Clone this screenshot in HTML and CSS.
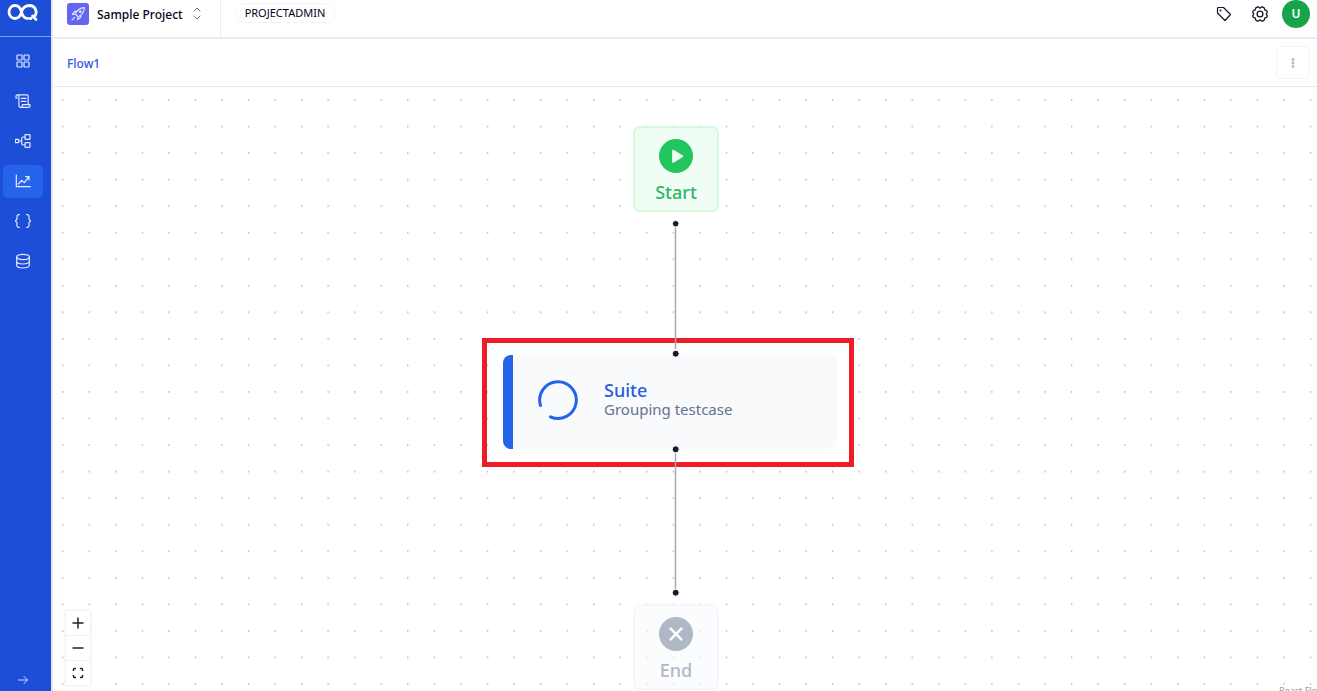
FILE: index.html
```html
<!DOCTYPE html>
<html lang="en">
<head>
<meta charset="utf-8">
<title>Flow1</title>
<link rel="stylesheet" href="styles.css">
</head>
<body>
<div class="app">
  <aside class="sidebar">
    <a class="logo" href="#" aria-label="Home">
      <svg width="32" height="20" viewBox="0 0 32 20" fill="none" stroke="#fff" stroke-width="2.800" stroke-linecap="round">
        <path d="M8 2.500A6 6.500 0 1 0 8 15.500C11 15.500 13.500 13 14.500 9C15.500 5 18 2.500 23 2.500A6.300 6.500 0 0 1 27 13.800M8 2.500C11 2.500 13.500 5 14.500 9C15.500 13 17.500 15.500 20.500 15.500M25.500 13L29 16.500M23 15.500H24"/>
      </svg>
    </a>
    <nav class="nav">
      <a class="nav-item" href="#" aria-label="Dashboard">
        <svg class="icon" viewBox="0 0 24 24"><rect x="3" y="3" width="7.500" height="7.500" rx="1"/><rect x="13.500" y="3" width="7.500" height="7.500" rx="1"/><rect x="3" y="13.500" width="7.500" height="7.500" rx="1"/><rect x="13.500" y="13.500" width="7.500" height="7.500" rx="1"/></svg>
      </a>
      <a class="nav-item" href="#" aria-label="Scripts">
        <svg class="icon" viewBox="0 0 24 24"><path d="M3.500 7.500H1.500V5a2.200 2.200 0 0 1 4.400 0v14a2.500 2.500 0 0 0 2.500 2.500H20a2.500 2.500 0 0 0 2.500-2.500v-1.500H11V19a2.500 2.500 0 0 1-2.600 2.500M3.700 2.800H17.500a2.200 2.200 0 0 1 2.200 2.200v12M9.500 8h7M9.500 12.500h7"/></svg>
      </a>
      <a class="nav-item" href="#" aria-label="Flows">
        <svg class="icon" viewBox="0 0 24 24"><rect x="0.500" y="9.500" width="5" height="5" rx="1"/><rect x="15" y="2.500" width="7.500" height="7" rx="1"/><rect x="15" y="14.500" width="7.500" height="7" rx="1"/><path d="M5.500 12H10M15 6h-2.500A2.500 2.500 0 0 0 10 8.500v7a2.500 2.500 0 0 0 2.500 2.500H15"/></svg>
      </a>
      <a class="nav-item active" href="#" aria-label="Runs">
        <svg class="icon" viewBox="0 0 24 24"><path d="M2 3v17.500h21M5 16.500l5-5.500 4 3.500 7-9M16 5.500h5v5"/></svg>
      </a>
      <a class="nav-item" href="#" aria-label="Variables">
        <svg class="icon" viewBox="0 0 24 24"><path d="M6.500 2.500h-1A2.500 2.500 0 0 0 3 5v4.500L.5 12 3 14.500V19a2.500 2.500 0 0 0 2.500 2.500h1M17.500 2.500h1A2.500 2.500 0 0 1 21 5v4.500l2.500 2.500-2.500 2.500V19a2.500 2.500 0 0 1-2.500 2.500h-1"/></svg>
      </a>
      <a class="nav-item" href="#" aria-label="Data">
        <svg class="icon" viewBox="0 0 24 24"><ellipse cx="12" cy="6" rx="9.500" ry="4"/><path d="M2.500 6v12.500c0 2.200 4.200 4 9.500 4s9.500-1.800 9.500-4V6M2.500 12.500c0 2.200 4.200 4 9.500 4s9.500-1.800 9.500-4"/></svg>
      </a>
    </nav>
    <button class="expand" type="button" aria-label="Expand menu">
      <svg width="12" height="12" viewBox="0 0 12 12" fill="none" stroke="#c7d7fb" stroke-linecap="round" stroke-linejoin="round"><path d="M1.500 6h9M7 2.500L10.500 6 7 9.500"/></svg>
    </button>
  </aside>

  <main class="main">
    <header class="topbar">
      <button class="project" type="button">
        <span class="project-icon">
          <svg width="16" height="16" viewBox="0 0 24 24" fill="none" stroke="#e9e9ff" stroke-width="1.700" stroke-linejoin="round" stroke-linecap="round"><path d="M8 12C10 7 14 3 21.500 2.500 21 10 17 14 12 16zM8 12l-4.500.5L7 8h3M12 16l-.5 4.500L16 17v-3M8 12l4 4M3 21l4-4"/><circle cx="15.500" cy="8.500" r="1.200"/></svg>
        </span>
        <span>Sample Project</span>
        <svg width="12" height="16" viewBox="0 0 12 16" fill="none" stroke="#777" stroke-linecap="round" stroke-linejoin="round"><path d="M3 5l3-3 3 3M3 10l3 3 3-3"/></svg>
      </button>
      <span class="role">PROJECTADMIN</span>
      <div class="actions">
        <button class="icon-button" type="button" aria-label="Tags">
          <svg width="16" height="16" viewBox="0 0 16 16" fill="none" stroke="#111827" stroke-width="1.200" stroke-linejoin="round"><path d="M1.500 2.500Q1.500 1.500 2.500 1.500H7.500L14.500 8.500 9 14.500 1.500 7z"/><circle cx="4.500" cy="4.500" r=".4"/></svg>
        </button>
        <button class="icon-button" type="button" aria-label="Settings">
          <svg width="16" height="16" viewBox="0 0 16 16" fill="none" stroke="#111827" stroke-width="1.300" stroke-linejoin="round"><path d="M5.300 1H6.500L8 2.200 9.500 1h1.200l1.500.9.500 2 2 .8.600 1.300-1 2 1 2-.6 1.300-2 .8-.5 2-1.500.9H9.500L8 13.800 6.500 15H5.300l-1.500-.9-.5-2-2-.8L.7 10l1-2-1-2 .6-1.300 2-.8.5-2z"/><circle cx="8" cy="8" r="2.900"/></svg>
        </button>
        <button class="avatar" type="button" aria-label="Account">U</button>
      </div>
    </header>

    <div class="tabs">
      <a class="tab" href="#">Flow1</a>
      <button class="more" type="button" aria-label="More options">
        <svg width="6" height="12" viewBox="0 0 6 12" fill="none" stroke="#8b8b8b" stroke-width=".8"><circle cx="3" cy="2.500" r="1"/><circle cx="3" cy="6" r="1"/><circle cx="3" cy="9.500" r="1"/></svg>
      </button>
    </div>

    <section class="canvas" aria-label="Flow">
      <svg class="grid" width="100%" height="100%" aria-hidden="true">
        <defs>
          <pattern id="dots" width="15" height="15" patternUnits="userSpaceOnUse" patternTransform="translate(9 12) scale(1.770)">
            <circle cx=".4" cy=".5" r=".4" fill="#85858e"/>
          </pattern>
        </defs>
        <rect width="100%" height="100%" fill="url(#dots)"/>
      </svg>
      <div class="node start">
        <svg width="34" height="34" viewBox="0 0 35 35"><circle cx="17.500" cy="17.500" r="17.500" fill="#22c55e"/><path d="M14.500 12v11.500l9.500-5.700z" fill="#f0fdf4" stroke="#f0fdf4" stroke-width="2" stroke-linejoin="round"/></svg>
        <span>Start</span>
      </div>
      <div class="highlight">
        <div class="suite">
          <svg width="42" height="42" viewBox="0 0 42 42" fill="none" stroke="#2563eb" stroke-width="3" stroke-linecap="round"><path d="M3.500 26.500A18.300 18.300 0 1 1 13.500 37.800"/></svg>
          <div class="suite-label">
            <div class="suite-title">Suite</div>
            <div class="suite-text">Grouping testcase</div>
          </div>
        </div>
      </div>
      <div class="node end">
        <svg width="34" height="34" viewBox="0 0 35 35"><circle cx="17.500" cy="17.500" r="17.500" fill="#b0b8c5"/><path d="M12 12l11 11M23 12L12 23" stroke="#fff" stroke-width="2.600" stroke-linecap="round"/></svg>
        <span>End</span>
      </div>
      <svg class="edges" width="10" height="380" viewBox="0 0 10 380" aria-hidden="true">
        <path d="M4.500 7V130M4.500 233V370" stroke="#aaaab0" stroke-width="1.500"/>
        <g fill="#1a192b" stroke="#fff"><circle cx="4.700" cy="4.700" r="3.300"/><circle cx="4.700" cy="134.700" r="3.500"/><circle cx="4.700" cy="230.300" r="3.500"/><circle cx="4.700" cy="373.700" r="3.500"/></g>
      </svg>
      <div class="controls">
        <button type="button" aria-label="Zoom in"><svg width="12" height="12" viewBox="0 0 12 12"><path d="M6 .5v11M.5 6h11"/></svg></button>
        <button type="button" aria-label="Zoom out"><svg width="12" height="12" viewBox="0 0 12 12"><path d="M.5 6h11"/></svg></button>
        <button type="button" aria-label="Fit view"><svg width="12" height="12" viewBox="0 0 12 12"><path d="M1.500 4V2.500Q1.500 1.500 2.500 1.500H4M8 1.500h1.500q1 0 1 1V4M10.500 8v1.500q0 1-1 1H8M4 10.500H2.500q-1 0-1-1V8"/></svg></button>
      </div>
      <a class="attribution" href="#">React Flow</a>
    </section>
  </main>
</div>
</body>
</html>
```
FILE: styles.css
```css
* { box-sizing: border-box; }
body { margin: 0; font-family: "Noto Sans", "Open Sans", sans-serif; color: #020617; background: #fff; }
button { font: inherit; color: inherit; border: 0; padding: 0; background: none; cursor: pointer; }
a { text-decoration: none; }
svg { display: block; flex: none; }

.app { display: flex; height: 100vh; overflow: hidden; }
.sidebar { width: 53px; flex: none; display: flex; flex-direction: column; background: #1d4ed8; border-right: 2px solid #e2e8f0; }
.logo { height: 37px; flex: none; padding: 3px 0 0 7px; border-bottom: 1px solid #7f9be8; }
.nav { display: flex; flex-direction: column; gap: 7px; padding: 8px 8px 0 3px; }
.nav-item { height: 33px; display: flex; align-items: center; justify-content: center; padding-bottom: 1px; border-radius: 5px; }
.nav-item.active { background: #2563eb; }
.icon { width: 16px; height: 16px; fill: none; stroke: #e4ebff; stroke-width: 1.8; stroke-linejoin: round; stroke-linecap: round; }
.expand { margin: auto 0 5px 17px; width: 12px; }

.main { flex: 1; min-width: 0; display: flex; flex-direction: column; }
.topbar { height: 39px; flex: none; display: flex; border-bottom: 2px solid #e6ebf2; }
.project { display: flex; align-items: center; gap: 8px; padding: 0 17px 9px 14px; border-right: 1px solid #e8edf3; font-size: 12px; font-weight: 500; }
.project-icon { width: 22px; height: 22px; display: grid; place-items: center; border-radius: 3px; background: #6366f1; }
.role { height: 20px; margin: 3px 0 0 14px; padding: 0 9px; border: 1px solid #f4f5f7; border-radius: 10px; font-size: 11px; line-height: 18px; }
.actions { display: flex; align-items: center; gap: 20px; margin-left: auto; padding: 0 7px 10px 0; }
.avatar { width: 28px; height: 28px; margin-left: -6px; border-radius: 50%; background: #16a34a; color: #fff; font-size: 12px; font-weight: 600; }

.tabs { height: 48px; flex: none; display: flex; align-items: center; justify-content: space-between; padding: 0 7px 0 14px; border-bottom: 1px solid #e4e9f0; }
.tab { padding-top: 2px; color: #2f57df; font-size: 12px; font-weight: 500; }
.more { width: 34px; height: 33px; display: grid; place-items: center; border: 1px solid #f3f4f6; border-radius: 5px; }

/* Free canvas: nodes sit at their own coordinates. */
.canvas { position: relative; flex: 1; min-height: 0; overflow: hidden; }
.grid { position: absolute; inset: 0; }
.node { position: absolute; left: 580px; width: 86px; height: 86px; display: flex; flex-direction: column; align-items: center; padding-top: 11px; border-radius: 7px; font-size: 18px; font-weight: 500; line-height: 24px; gap: 7px; }
.start { top: 39px; background: #f0fdf4; border: 2px solid #d3f9df; color: #2fb864; }
.end { top: 517px; background: rgba(248, 250, 252, .6); border: 2px solid #f6f7fc; color: #b0b8c5; }
.highlight { position: absolute; left: 429px; top: 251px; width: 372px; padding: 12px 12px 13px; border: 5px solid #ee1c25; }
.suite { height: 94px; margin-left: 4px; display: flex; align-items: center; gap: 25px; padding: 0 0 4px 24px; border-left: 10px solid #2563eb; border-radius: 8px; background: #f8fafc; }
.suite-label { padding-bottom: 2px; }
.suite-title { color: #2b5ce0; font-size: 18px; font-weight: 500; line-height: 20px; }
.suite-text { color: #64748b; font-size: 15px; line-height: 18px; }
.edges { position: absolute; left: 618px; top: 132px; }
.controls { position: absolute; left: 13px; top: 524px; width: 24px; box-shadow: 0 0 3px rgba(0, 0, 0, .14); background: #fff; }
.controls button { width: 24px; height: 25px; display: grid; place-items: center; border-bottom: 1px solid #f2f2f2; }
.controls button:last-child { height: 24px; border-bottom: 0; }
.controls svg { fill: none; stroke: #222; stroke-width: 1.5; }
.attribution { position: absolute; right: -7px; bottom: -7px; color: #999; font-size: 9px; line-height: 14px; }
```
